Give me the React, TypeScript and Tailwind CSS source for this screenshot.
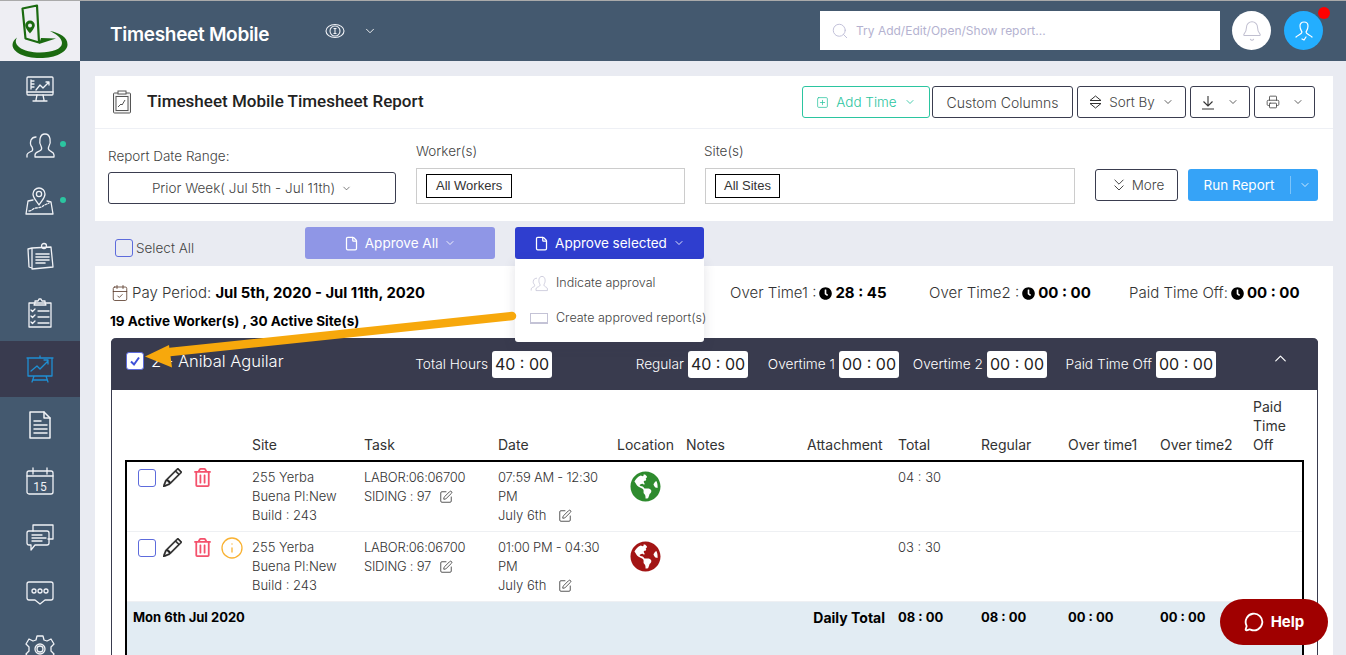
import React from "react";
import { ChevronDown, ChevronUp, Search, Bell, Printer, SquarePlus, ChevronsDown, MessageCircle, File, SquarePen, Info, CalendarCheck } from "lucide-react";
import { FaGlobeAmericas, FaClock, FaRegTrashAlt } from "react-icons/fa";
import { BsPencil } from "react-icons/bs";

const Ico = ({ children, size = 30, color = "#f0f2f6", vb = "0 0 30 30" }: { children: React.ReactNode; size?: number; color?: string; vb?: string }) => (
  <svg width={size} height={size} viewBox={vb} fill="none" stroke={color} strokeWidth="1.3" strokeLinejoin="round" strokeLinecap="round">
    {children}
  </svg>
);

const Users = ({ size = 30, color = "#f0f2f6" }: { size?: number; color?: string }) => (
  <Ico size={size} color={color}>
    <path d="M2 27v-2c0-2 3-3 5-4 1-1 1-2 0-4-2-2-2-4-1-7 1-2 3-3 5-3" />
    <path d="M10 27v-2c0-3 4-3 6-5 1-1 1-2 0-4-2-3-2-12 4-12s6 9 4 12c-1 2-1 3 0 4 2 2 5 2 5 5v2z" />
  </Ico>
);

const sideIcons: React.ReactNode[] = [
  <Ico key="0"><rect x="2" y="3" width="26" height="18" rx="1" /><path d="M2 18h26M12 21l-1 5M18 21l1 5M8 27h14" /><path d="M6 6v9M6 7h3M6 10h3M6 13h3M11 16l4-5 3 3 6-6M21 8h3v3" /></Ico>,
  <Users key="1" />,
  <Ico key="2"><path d="M14 19c-3-5-6-7-6-11a6 6 0 0 1 12 0c0 4-3 6-6 11z" /><circle cx="14" cy="8" r="2.6" /><path d="M8 14l-5 1-2 13h27l-2-12-4-1" /><path d="M4 25c3 0 4-3 7-3s6-1 7-2 4-2 6-3" strokeDasharray="2 1.5" /></Ico>,
  <Ico key="3"><path d="M3 7l4-1v20l-3-1zM7 6l19-1 2 20-21 2z" /><path d="M11 12h13M11 15h13M11 18h13M11 21h9" strokeWidth="1.6" /><circle cx="19" cy="4" r="2.5" /></Ico>,
  <Ico key="4"><rect x="4" y="5" width="22" height="24" /><path d="M10 5V3h3l1-2h2l1 2h3v2l1 2H9z" /><path d="M6 12l1.5 1.5L10 11M6 18l1.5 1.5L10 17M6 24l1.5 1.5L10 23M13 13h11M13 19h11M13 25h11" /></Ico>,
  <Ico key="5" color="#1f8fd3"><path d="M2 4h26M3 4v18h24V4M15 2v2M9 22l-2 6M21 22l2 6M8 26h14" /><path d="M6 17l6-5 3 3 8-8M19 6h4v4" /></Ico>,
  <Ico key="6"><path d="M5 2h14l6 6v20H5z" strokeWidth="1.5" /><path d="M19 2v6h6M9 11h7M9 15h13M9 19h13M9 23h13" strokeWidth="1.5" /></Ico>,
  <Ico key="7"><rect x="2" y="5" width="26" height="23" rx="2" /><path d="M2 10h26M8 2v6M22 2v6" /><text x="15" y="25" fontSize="12" fill="#f0f2f6" stroke="none" textAnchor="middle" fontFamily="Roboto, sans-serif">15</text></Ico>,
  <Ico key="8"><path d="M8 9V3h20v14h-5" /><path d="M2 11q0-2 2-2h18q2 0 2 2v10q0 2-2 2H10l-4 5v-5H4q-2 0-2-2z" /><path d="M7 13h10M7 16h14M7 19h10" /></Ico>,
  <Ico key="9"><path d="M4 4h22q2 0 2 2v14q0 2-2 2h-6l-5 4-5-4H4q-2 0-2-2V6q0-2 2-2z" /><circle cx="9" cy="13" r="2" /><circle cx="15" cy="13" r="2" /><circle cx="21" cy="13" r="2" /></Ico>,
  <Ico key="10"><path d="M12 2h6l1 4 3 1 4-2 3 5-3 3v4l3 3-3 5-4-2-3 2-1 4h-6l-1-4-3-2-4 2-3-5 3-3v-4L1 10l3-5 4 2 3-1z" /><circle cx="15" cy="15" r="5" /><circle cx="15" cy="15" r="3" /></Ico>,
];

const grid = "grid grid-cols-[125px_112px_134px_119px_69px_121px_91px_83px_87px_92px_93px_1fr]";

const Logo = () => (
  <svg width="80" height="60" viewBox="0 0 80 60">
    <path d="M22.500 7.500L37 4.500 39 41.500 25.500 37.500z" fill="none" stroke="#1b6a10" strokeWidth="2.2" strokeLinejoin="round" />
    <path d="M30 19.500a4.800 4.800 0 0 0-4.800 4.800c0 3 4.800 8.200 4.800 8.200s4.800-5.200 4.800-8.200a4.800 4.800 0 0 0-4.800-4.800zm0 2.900a2 2 0 1 1 0 4 2 2 0 0 1 0-4z" fill="#1b6a10" />
    <path d="M39 43L56 37.500 41 37z" fill="#1b6a10" />
    <path d="M50 30C60 32 67.500 36 67.500 43.500 67.500 51 56 57 40 57 24 57 12.500 51 12.500 44 12.500 41 14 39 17 36.500 15 40 15.500 43 19 46 24 50 32 51.500 40 51.500 52 51.500 62 48 62 42 62 37 56 33 50 30z" fill="#1b6a10" />
  </svg>
);

const TopBtn = ({ w, mr, children, green }: { w: string; mr: string; children: React.ReactNode; green?: boolean }) => (
  <div className={`${w} ${mr} h-8 flex items-center justify-center gap-[7px] rounded-[3px] border bg-white text-[13.5px] font-light ${green ? "border-[#2bc5a0] text-[#2bc5a0]" : "border-[#3a3d4f] text-[#444]"}`}>
    {children}
  </div>
);

const TimeBox = ({ w, label, value }: { w: string; label: string; value: string }) => (
  <div className={`${w} flex items-center justify-end gap-[4px]`}>
    <span className="text-[13.7px] font-light text-white whitespace-nowrap">{label}</span>
    <span className="w-[60px] h-[27px] bg-white rounded-[3px] flex items-center justify-center text-[16px] text-[#222]">{value}</span>
  </div>
);

const Stat = ({ cls, label, value }: { cls: string; label: string; value: string }) => (
  <div className={`${cls} flex items-center whitespace-nowrap`}>
    <span className="text-[15px] font-light text-[#333]">{label}</span>
    <FaClock className="w-[13px] h-[13px] mx-[3px] text-black" />
    <span className="text-[15px] font-bold text-black">{value}</span>
  </div>
);

const Row = ({ total, color, info }: { total: string; color: string; info?: boolean }) => (
  <div className={`${grid} h-[70px] border-b border-[#eef0f3] pt-[6px] text-[13px] leading-[19px] font-light text-[#333]`}>
    <div className="pl-[11px] flex items-start">
      <span className="w-[18px] h-[18px] mt-[1px] rounded-[3px] border border-[#5d6bdc] bg-white shrink-0" />
      <BsPencil className="w-[19px] h-[19px] ml-[7px] text-[#222] stroke-[0.5]" />
      <FaRegTrashAlt className="w-[19px] h-[19px] ml-[11px] text-[#f4516c]" />
      {info && <Info className="w-[24px] h-[24px] -mt-[2px] ml-[8px] text-[#f9b233]" strokeWidth={1.3} />}
    </div>
    <div className="w-[95px]">255 Yerba Buena Pl:New Build : 243</div>
    <div className="tracking-[-0.25px]">
      LABOR:06:06700
      <div className="flex items-center gap-[8px]">SIDING : 97 <SquarePen className="w-[14px] h-[14px] text-[#333]" strokeWidth={1.4} /></div>
    </div>
    <div className="w-[112px] tracking-[-0.25px]">
      {total === "04 : 30" ? "07:59 AM - 12:30 PM" : "01:00 PM - 04:30 PM"}
      <div className="flex items-center gap-[12px] tracking-normal">July 6th <SquarePen className="w-[14px] h-[14px] text-[#333]" strokeWidth={1.4} /></div>
    </div>
    <div className="pl-[13px] pt-[3px]"><FaGlobeAmericas className="w-[31px] h-[31px]" style={{ color }} /></div>
    <div />
    <div />
    <div>{total}</div>
  </div>
);

const Chev = () => <ChevronDown className="w-[12px] h-[12px]" strokeWidth={1.7} />;

export default function App() {
  const headers = ["", "Site", "Task", "Date", "Location", "Notes", "Attachment", "Total", "Regular", "Over time1", "Over time2", "Paid Time Off"];
  return (
    <div className="relative w-[1346px] h-[655px] overflow-hidden flex bg-[#e9ebf2] [font-family:Inter,sans-serif] border-t border-[#aaaaaa]">
      <aside className="w-20 shrink-0 bg-[#44596f] flex flex-col">
        <div className="h-[60px] shrink-0 bg-[#eeeef3] flex items-center justify-center"><Logo /></div>
        {sideIcons.map((ic, i) => (
          <div key={i} className={`relative h-14 shrink-0 flex items-center justify-center ${i === 5 ? "bg-[#393b4f]" : ""}`}>
            {ic}
            {(i === 1 || i === 2) && <span className="absolute left-[60px] top-[24px] w-[6px] h-[6px] rounded-full bg-[#2bc5a0]" />}
          </div>
        ))}
      </aside>

      <main className="flex-1 min-w-0">
        <header className="h-[60px] bg-[#44596f] flex items-center pl-[30px]">
          <span className="w-[215px] mt-2 text-[19px] font-semibold text-white whitespace-nowrap tracking-[-0.3px]">Timesheet Mobile</span>
          <svg width="20" height="16" viewBox="0 0 20 16" fill="none" stroke="#f0f2f6" strokeWidth="1.1"><ellipse cx="10" cy="8" rx="9" ry="6.500" /><circle cx="10" cy="8" r="5" /><path d="M10 5v6M8.500 5.500h3M8.500 10.500h3" /></svg>
          <ChevronDown className="w-[14px] h-[14px] ml-[18px] text-white" strokeWidth={1.5} />
          <div className="ml-[443px] w-[400px] h-[39px] -mt-px bg-white flex items-center pl-[11px] gap-[7px]">
            <Search className="w-[18px] h-[18px] text-[#c0bfd8]" strokeWidth={1.3} />
            <span className="text-[12px] text-[#b4b2d0]">Try Add/Edit/Open/Show report...</span>
          </div>
          <div className="ml-[12px] w-[39px] h-[39px] -mt-px rounded-full bg-white flex items-center justify-center"><Bell className="w-[22px] h-[22px] text-[#c0bfd0]" strokeWidth={1.1} /></div>
          <div className="relative ml-[13px] w-[39px] h-[39px] -mt-px rounded-full bg-[#23aeff] flex items-center justify-center">
            <svg width="20" height="22" viewBox="0 0 20 22" fill="none" stroke="#fff" strokeWidth="1.2" strokeLinecap="round"><path d="M10 2c-3 0-4 2-4 4 0 3 1 4 2 6 0 2-4 3-6 5M10 2c3 0 4 2 4 4 0 3-1 4-2 6 0 2 4 3 6 5M8 19l2 1 2-3" /></svg>
            <span className="absolute -top-[4px] right-[-7px] w-3 h-3 rounded-full bg-[#ff0000]" />
          </div>
        </header>

        <div className="pl-[15px] pr-[13px] pt-[15px]">
          <section className="bg-white h-[145px]">
            <div className="h-[53px] border-b border-[#eef0f5] flex items-center pl-[17px] pr-[18px]">
              <svg width="20" height="25" viewBox="0 0 20 25" fill="none" stroke="#555" strokeWidth="1"><rect x="1.500" y="3" width="17" height="20" rx="1" fill="#f1f1f1" /><rect x="6" y="1" width="8" height="3" fill="#fff" /><rect x="4" y="6.500" width="12" height="14" fill="#fff" /><path d="M6 17l3-3 1 1 3-5" /></svg>
              <h1 className="ml-[15px] text-[17px] font-medium text-[#222] [font-family:Roboto,sans-serif] whitespace-nowrap">Timesheet Mobile Timesheet Report</h1>
              <div className="ml-auto flex">
                <TopBtn green w="w-[128px]" mr="mr-[2px]"><SquarePlus className="w-[13px] h-[13px]" strokeWidth={1.4} />Add Time<Chev /></TopBtn>
                <TopBtn w="w-[141px]" mr="mr-[4px]"><span className="text-[14px]">Custom Columns</span></TopBtn>
                <TopBtn w="w-[109px]" mr="mr-[4px]"><svg width="13" height="14" viewBox="0 0 13 14" fill="none" stroke="#333"><path d="M1 5.500L6.500 1 12 5.500zM1 8.500L6.500 13 12 8.500z" /></svg>Sort By<Chev /></TopBtn>
                <TopBtn w="w-[60px]" mr="mr-[4px]"><svg width="14" height="15" viewBox="0 0 14 15" fill="none" stroke="#333" strokeWidth="1.1" className="mr-[5px]"><path d="M7 1v10M2.500 6.500L7 11l4.500-4.500M1 14h12" /></svg><Chev /></TopBtn>
                <TopBtn w="w-[61px]" mr="mr-0"><Printer className="w-[14px] h-[14px] mr-[5px]" strokeWidth={1.4} /><Chev /></TopBtn>
              </div>
            </div>
            <div className="flex pl-[13px] text-[13.5px] font-light text-[#444]">
              <div className="w-[288px] mr-[20px] pt-[18px]">
                <div className="h-[18px] leading-[18px]">Report Date Range:</div>
                <div className="mt-[7px] h-8 rounded-[3px] border border-[#3a3d4f] flex items-center justify-center gap-[6px] text-[13.5px]">Prior Week( Jul 5th - Jul 11th)<ChevronDown className="w-[11px] h-[11px]" strokeWidth={1.5} /></div>
              </div>
              <div className="w-[269px] mr-[20px] pt-[13px]">
                <div className="h-[18px] leading-[18px]">Worker(s)</div>
                <div className="mt-[8px] h-[36px] border border-[#cccccc] flex items-start pl-[9px] pt-[5px]">
                  <span className="h-[24px] px-[9px] border border-black flex items-center [font-family:Liberation_Sans,sans-serif] font-normal text-[13px] text-[#333]">All Workers</span>
                </div>
              </div>
              <div className="w-[370px] mr-[20px] pt-[13px]">
                <div className="h-[18px] leading-[18px] -ml-px">Site(s)</div>
                <div className="mt-[8px] h-[36px] border border-[#cccccc] flex items-start pl-[9px] pt-[5px]">
                  <span className="h-[24px] px-[8px] border border-black flex items-center [font-family:Liberation_Sans,sans-serif] font-normal text-[13px] text-[#333]">All Sites</span>
                </div>
              </div>
              <div className="mt-[40px] w-[83px] h-8 rounded-[3px] border border-[#3a3d4f] flex items-center justify-center gap-[3px] text-[13.5px]"><ChevronsDown className="w-[20px] h-[20px] text-[#222]" strokeWidth={1} />More</div>
              <div className="mt-[40px] ml-[10px] w-[130px] h-8 rounded-[3px] bg-[#36a3f7] flex items-center text-white text-[13.5px] font-normal">
                <span className="w-[102px] text-center">Run Report</span>
                <span className="w-px h-[18px] bg-[#7cc4fa]" />
                <ChevronDown className="w-[12px] h-[12px] ml-[8px]" strokeWidth={1.5} />
              </div>
            </div>
          </section>

          <div className="relative h-[45px] flex items-start">
            <div className="ml-[20px] mt-[17px] flex items-center w-[190px] text-[13.5px] font-light text-[#444]">
              <span className="w-[18px] h-[18px] rounded-[3px] border border-[#5d6bdc] mr-[3px]" />Select All
            </div>
            <div className="mt-[6px] w-[190px] h-8 rounded-[3px] bg-[#8f96e6] text-white text-[13.5px] flex items-center justify-center gap-[6px]"><File className="w-[15px] h-[15px]" strokeWidth={2} />Approve All<Chev /></div>
            <div className="ml-[20px] mt-[6px] w-[189px] h-8 rounded-[3px] bg-[#2f3ecf] text-white text-[13.5px] flex items-center justify-center gap-[6px]"><File className="w-[15px] h-[15px]" strokeWidth={2} />Approve selected<Chev /></div>
          </div>

          <section className="bg-white h-[400px] pl-4 pr-[15px] relative">
            <div className="flex items-center h-[54px]">
              <div className="flex items-center w-[619px] whitespace-nowrap">
                <CalendarCheck className="w-[18px] h-[18px] text-[#5a3a2a]" strokeWidth={1.1} />
                <span className="ml-[3px] text-[15px] font-light text-[#333]">Pay Period:&nbsp;</span>
                <span className="text-[14.8px] font-bold text-black">Jul 5th, 2020 - Jul 11th, 2020</span>
              </div>
              <Stat cls="w-[199px]" label="Over Time1 :" value="28 : 45" />
              <Stat cls="w-[200px]" label="Over Time2 :" value="00 : 00" />
              <Stat cls="" label="Paid Time Off:" value="00 : 00" />
            </div>
            <div className="text-[13.5px] font-bold text-black leading-[18px] -mt-[8px] h-[26px] -ml-px whitespace-nowrap">19 Active Worker(s) , 30 Active Site(s)</div>

            <div className="rounded-t-[5px] border-x border-[#393b4e]">
              <div className="h-[52px] bg-[#393b4e] rounded-t-[5px] flex items-center pl-[15px] -mx-px">
                <div className="w-[274px] -mt-[6px] flex items-center">
                  <span className="w-[18px] h-[18px] rounded-[3px] bg-white border border-[#5d6bdc] flex items-center justify-center shrink-0">
                    <svg width="12" height="12" viewBox="0 0 12 12" fill="none" stroke="#3f51d9" strokeWidth="2"><path d="M2 6.500l3 3 5-7" /></svg>
                  </span>
                  <span className="ml-[7px] text-[16.5px] font-light text-white whitespace-nowrap">2 - Anibal Aguilar</span>
                </div>
                <TimeBox w="w-[152px]" label="Total Hours" value="40 : 00" />
                <TimeBox w="w-[196px]" label="Regular" value="40 : 00" />
                <TimeBox w="w-[151px]" label="Overtime 1" value="00 : 00" />
                <TimeBox w="w-[148px]" label="Overtime 2" value="00 : 00" />
                <TimeBox w="w-[169px]" label="Paid Time Off" value="00 : 00" />
                <ChevronUp className="ml-[55px] -mt-[12px] w-[19px] h-[19px] text-white" strokeWidth={1.5} />
              </div>
              <div className="px-[13px] bg-white">
                <div className={`${grid} h-[70px] items-end pb-[6px] pl-[2px] text-[14px] leading-[19px] font-normal text-[#333]`}>
                  {headers.map((h, i) => <div key={i} className={i === 11 ? "w-[40px]" : "whitespace-nowrap"}>{h}</div>)}
                </div>
                <div className="border-2 border-black h-[195px]">
                  <Row total="04 : 30" color="#2e8b2e" />
                  <Row total="03 : 30" color="#a31515" info />
                  <div className={`${grid} h-[60px] bg-[#e2ecf3] pt-[6px] text-[13px] leading-[19px] font-bold text-black`}>
                    <div className="col-span-6 pl-[6px]">Mon 6th Jul 2020</div>
                    <div className="text-right text-[14px] pr-[13px] -ml-[40px] whitespace-nowrap">Daily Total</div>
                    <div>08 : 00</div>
                    <div>08 : 00</div>
                    <div>00 : 00</div>
                    <div>00 : 00</div>
                  </div>
                </div>
              </div>
            </div>
          </section>
        </div>
      </main>

      {/* Dropdown menu */}
      <div className="absolute left-[515px] top-[258px] w-[189px] h-[83px] bg-white rounded-b-[3px] shadow-[0_4px_12px_rgba(60,60,90,0.15)] text-[12.5px] text-[#444]">
        <div className="h-[42px] pl-[15px] pt-[6px] flex items-center gap-[8px]"><Users size={18} color="#c4c3d6" /><span className="font-light whitespace-nowrap">Indicate approval</span></div>
        <div className="h-[34px] pl-[15px] flex items-center gap-[8px]"><span className="w-[18px] h-[11px] shrink-0 border border-[#c4c3d6] border-b-2" /><span className="font-light whitespace-nowrap">Create approved report(s)</span></div>
      </div>

      {/* Annotation arrow */}
      <svg className="absolute left-0 top-0 pointer-events-none" width="1346" height="655" viewBox="0 0 1346 655">
        <path d="M512 315L170 351" stroke="#f7a80c" strokeWidth="8.500" strokeLinecap="round" />
        <path d="M145 355.500L169 344L172 366.500z" fill="#f7a80c" />
      </svg>

      {/* Help button */}
      <div className="absolute left-[1220px] top-[598px] w-[108px] h-[46px] rounded-[23px] bg-[#a00000] flex items-center justify-center gap-[7px] text-white text-[15px] font-bold">
        <MessageCircle className="w-[20px] h-[20px]" strokeWidth={2.2} />Help
      </div>
    </div>
  );
}
